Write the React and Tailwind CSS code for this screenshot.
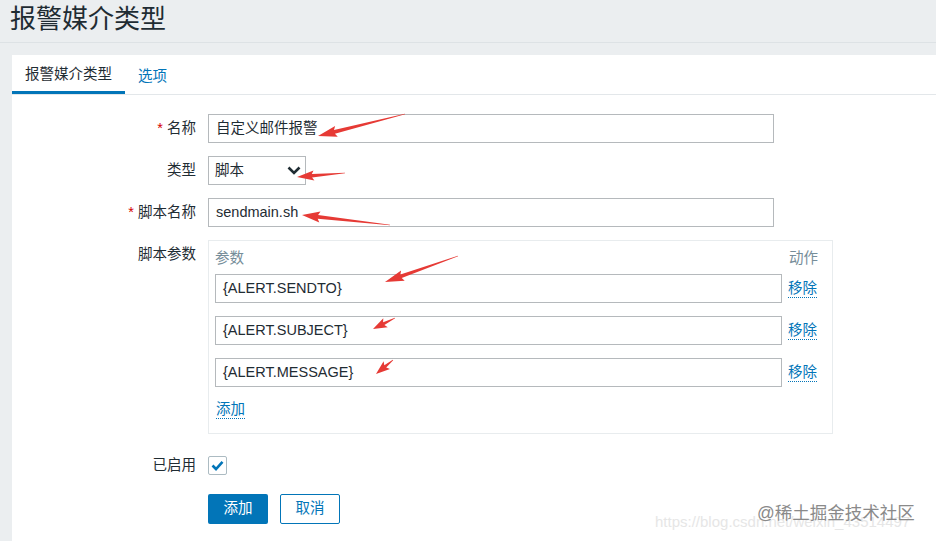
import React from 'react';

const FONT = { fontFamily: '"Liberation Sans", Arial, "Noto Sans CJK SC", sans-serif' };

// red annotation arrows drawn over the screenshot
const ARROWS = [
  { from: [405, 114], to: [318, 136], head: 17, wing: 5.5, shaft: 1.9 },
  { from: [345, 173], to: [297, 177], head: 15, wing: 5, shaft: 1.7 },
  { from: [390, 225], to: [302, 215], head: 16, wing: 5.5, shaft: 1.9 },
  { from: [458, 256], to: [385, 282], head: 17, wing: 5.5, shaft: 1.9 },
  { from: [395, 318], to: [373, 329], head: 12, wing: 5, shaft: 1.5 },
  { from: [393, 360], to: [376, 374], head: 12, wing: 5, shaft: 1.5 },
];

function arrowPoints({ from, to, head, wing, shaft }) {
  const dx = to[0] - from[0];
  const dy = to[1] - from[1];
  const len = Math.hypot(dx, dy);
  const ux = dx / len;
  const uy = dy / len;
  const nx = -uy;
  const ny = ux;
  const bx = to[0] - ux * head;
  const by = to[1] - uy * head;
  const pts = [
    [from[0] + nx * 0.3, from[1] + ny * 0.3],
    [bx + nx * shaft, by + ny * shaft],
    [bx - ux * 2 + nx * wing, by - uy * 2 + ny * wing],
    to,
    [bx - ux * 2 - nx * wing, by - uy * 2 - ny * wing],
    [bx - nx * shaft, by - ny * shaft],
    [from[0] - nx * 0.3, from[1] - ny * 0.3],
  ];
  return pts.map((p) => `${p[0].toFixed(1)},${p[1].toFixed(1)}`).join(' ');
}

function Label({ children, required, top }) {
  return (
    <div className={`text-right leading-[29px] ${top ? 'self-start' : ''}`}>
      {required && <span className="text-[#d40000]">* </span>}
      {children}
    </div>
  );
}

function TextBox({ value, className = '' }) {
  return (
    <div
      className={`h-[29px] border border-[#b5b9bc] bg-white px-[7px] leading-[27px] text-[#1f2c33] ${className}`}
    >
      {value}
    </div>
  );
}

function LinkText({ children }) {
  return (
    <span className="inline-block border-b border-dotted border-[#0275b8] leading-[17px] text-[#0275b8]">
      {children}
    </span>
  );
}

export default function App() {
  const params = ['{ALERT.SENDTO}', '{ALERT.SUBJECT}', '{ALERT.MESSAGE}'];

  return (
    <div
      className="relative flex h-[541px] w-[936px] flex-col overflow-hidden bg-[#ebeef0] text-[14.5px] text-[#1f2c33]"
      style={FONT}
    >
      <header className="h-[43px] shrink-0 border-b border-[#dde2e5] px-[10px] pt-[4px]">
        <h1 className="text-[26px] leading-[31px]">报警媒介类型</h1>
      </header>

      <main className="mt-[12px] ml-[12px] flex-1 bg-white">
        <nav className="flex h-[40px] border-b border-[#e3e7ea]">
          <div className="flex items-center border-b-[3px] border-[#0275b8] px-[13px] pt-[4px]">
            报警媒介类型
          </div>
          <div className="flex items-center px-[13px] pt-[4px] text-[#0275b8]">选项</div>
        </nav>

        <div className="grid grid-cols-[184px_1fr] items-center gap-x-[12px] gap-y-[13px] pt-[19px]">
          <Label required>名称</Label>
          <TextBox value="自定义邮件报警" className="w-[566px]" />

          <Label>类型</Label>
          <div className="flex h-[29px] w-[98px] items-center justify-between border border-[#b5b9bc] bg-white pr-[4px] pl-[6px]">
            <span>脚本</span>
            <svg width="14" height="9" viewBox="0 0 14 9">
              <path d="M1.5 1.5 L7 7 L12.5 1.5" fill="none" stroke="#1f2c33" strokeWidth="2.6" />
            </svg>
          </div>

          <Label required>脚本名称</Label>
          <TextBox value="sendmain.sh" className="w-[566px]" />

          <Label top>脚本参数</Label>
          <div className="w-[625px] border border-[#e8ecee] pt-[5px] pr-[14px] pb-[12px] pl-[6px]">
            <div className="flex justify-between leading-[24px] text-[#768d99]">
              <span>参数</span>
              <span>动作</span>
            </div>
            <div className="mt-[4px] grid grid-cols-[567px_1fr] items-center gap-x-[6px] gap-y-[13px]">
              {params.map((p) => (
                <React.Fragment key={p}>
                  <TextBox value={p} />
                  <div>
                    <LinkText>移除</LinkText>
                  </div>
                </React.Fragment>
              ))}
            </div>
            <div className="mt-[12px] pl-[1px]">
              <LinkText>添加</LinkText>
            </div>
          </div>
        </div>

        <div className="mt-[17px] grid grid-cols-[184px_1fr] items-center gap-x-[12px]">
          <Label>已启用</Label>
          <div className="flex h-[19px] w-[19px] items-center justify-center rounded-[2px] border border-[#acbbc2] bg-white">
            <svg width="13" height="11" viewBox="0 0 13 11">
              <path d="M1.5 5.5 L5 9 L11.5 1.8" fill="none" stroke="#0275b8" strokeWidth="2.6" />
            </svg>
          </div>
        </div>

        <div className="mt-[14px] flex gap-[12px] pl-[196px]">
          <button className="h-[30px] w-[60px] rounded-[2px] bg-[#0275b8] text-white">添加</button>
          <button className="h-[30px] w-[60px] rounded-[2px] border border-[#0275b8] bg-white text-[#0275b8]">
            取消
          </button>
        </div>
      </main>

      <svg className="pointer-events-none absolute inset-0" width="936" height="541">
        {ARROWS.map((a, i) => (
          <polygon key={i} points={arrowPoints(a)} fill="#e63a35" />
        ))}
      </svg>

      <div className="pointer-events-none absolute top-[511px] left-[655px] text-[15px] whitespace-nowrap text-[#e6e6e6]">
        https://blog.csdn.net/weixin_43514497
      </div>
      <div className="pointer-events-none absolute top-[500px] left-[757px] text-[17.5px] whitespace-nowrap text-[#8a8a8a]">
        @稀土掘金技术社区
      </div>
    </div>
  );
}
